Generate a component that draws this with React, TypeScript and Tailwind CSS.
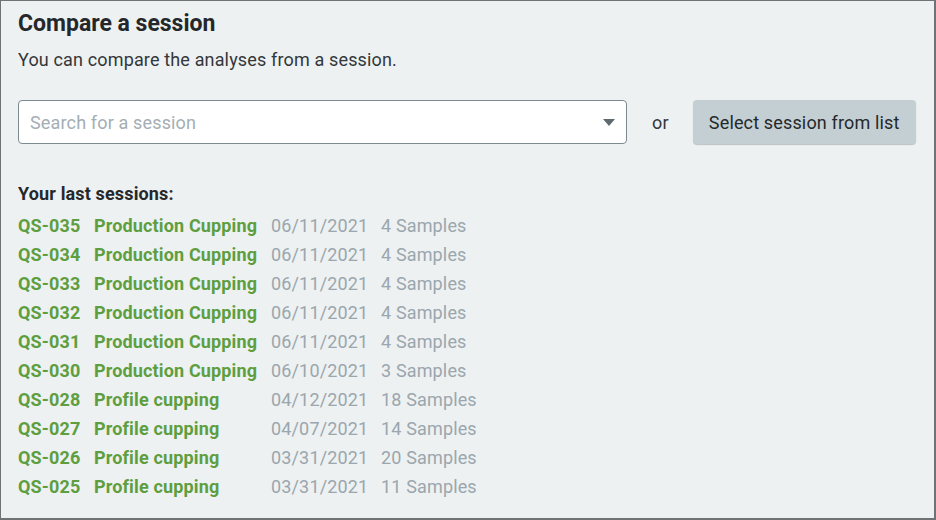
const sessions = [
  { id: 'QS-035', name: 'Production Cupping', date: '06/11/2021', samples: 4 },
  { id: 'QS-034', name: 'Production Cupping', date: '06/11/2021', samples: 4 },
  { id: 'QS-033', name: 'Production Cupping', date: '06/11/2021', samples: 4 },
  { id: 'QS-032', name: 'Production Cupping', date: '06/11/2021', samples: 4 },
  { id: 'QS-031', name: 'Production Cupping', date: '06/11/2021', samples: 4 },
  { id: 'QS-030', name: 'Production Cupping', date: '06/10/2021', samples: 3 },
  { id: 'QS-028', name: 'Profile cupping', date: '04/12/2021', samples: 18 },
  { id: 'QS-027', name: 'Profile cupping', date: '04/07/2021', samples: 14 },
  { id: 'QS-026', name: 'Profile cupping', date: '03/31/2021', samples: 20 },
  { id: 'QS-025', name: 'Profile cupping', date: '03/31/2021', samples: 11 },
];

export default function App() {
  return (
    <div
      className="h-[520px] w-[936px] border border-r-2 border-b-2 border-[#6e7376] bg-[#edf1f2] px-[17px] pt-[9px] text-[#25282b] tracking-[0.15px]"
      style={{ fontFamily: 'Roboto, "Liberation Sans", sans-serif' }}
    >
      {/* Header */}
      <h1 className="text-[23px] font-bold leading-[28px] tracking-normal">Compare a session</h1>
      <p className="mt-[10px] text-[18px] leading-[24px] text-[#33373a]">You can compare the analyses from a session.</p>

      {/* Search row */}
      <div className="mt-[28px] flex items-center">
        <div className="flex h-[44px] w-[609px] items-center justify-between rounded-[4px] border border-[#7d8a92] bg-white pl-[11px] pr-[11px]">
          <span className="text-[18px] text-[#a4aeb4]">Search for a session</span>
          <svg width="12" height="7" viewBox="0 0 12 7">
            <path d="M0 0h12L6 7z" fill="#5f6a70" />
          </svg>
        </div>
        <span className="ml-[25px] text-[18px] text-[#33373a]">or</span>
        <button className="ml-[24px] h-[44px] w-[223px] rounded-[4px] bg-[#c4cfd3] text-[18px] text-[#25282b] shadow-[0_1px_1px_rgba(0,0,0,0.2)]">
          Select session from list
        </button>
      </div>

      {/* Last sessions */}
      <h2 className="mt-[38px] text-[18px] font-bold leading-[24px]">Your last sessions:</h2>
      <div className="mt-[5px] text-[18px]">
        {sessions.map(s => (
          <div key={s.id} className="flex h-[29px] items-center">
            <span className="w-[76px] font-bold text-[#5f9e3e]">{s.id}</span>
            <span className="w-[177px] font-bold text-[#5f9e3e]">{s.name}</span>
            <span className="w-[110px] text-[#9ba6ad]">{s.date}</span>
            <span className="text-[#9ba6ad]">{s.samples} Samples</span>
          </div>
        ))}
      </div>
    </div>
  );
}
